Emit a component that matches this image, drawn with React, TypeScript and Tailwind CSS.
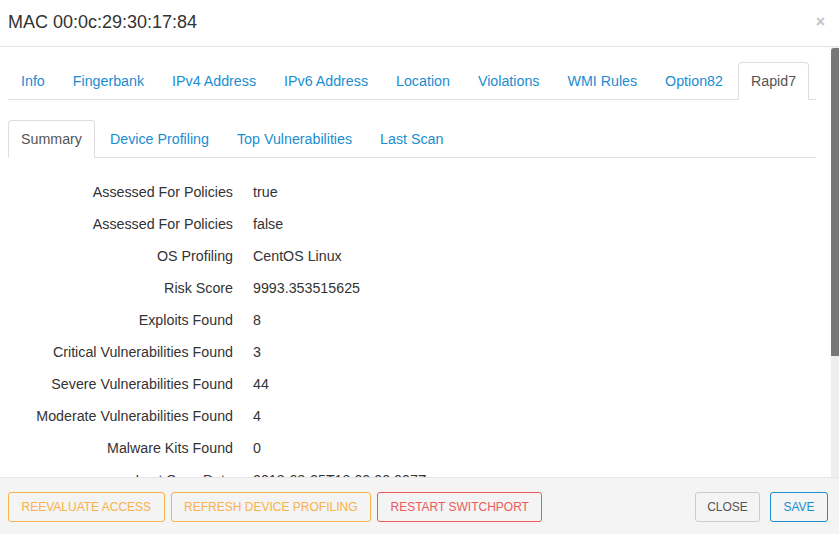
import React from 'react';

const MAIN_TABS = ['Info', 'Fingerbank', 'IPv4 Address', 'IPv6 Address', 'Location', 'Violations', 'WMI Rules', 'Option82', 'Rapid7'];
const SUB_TABS = ['Summary', 'Device Profiling', 'Top Vulnerabilities', 'Last Scan'];

const ROWS: [string, string][] = [
  ['Assessed For Policies', 'true'],
  ['Assessed For Policies', 'false'],
  ['OS Profiling', 'CentOS Linux'],
  ['Risk Score', '9993.353515625'],
  ['Exploits Found', '8'],
  ['Critical Vulnerabilities Found', '3'],
  ['Severe Vulnerabilities Found', '44'],
  ['Moderate Vulnerabilities Found', '4'],
  ['Malware Kits Found', '0'],
  ['Last Scan Date', '2018-08-25T18:00:00.007Z'],
  ['Last Scan Engine', 'Local scan engine'],
  ['Site', 'PacketFence'],
  ['Total Vulnerabilities Found', '51'],
  ['Last Updated', '2018-08-27T09:14:22.000Z'],
];

function Tabs({ items, active }: { items: string[]; active: string }) {
  return (
    <ul className="flex whitespace-nowrap border-b border-[#dddddd]">
      {items.map((t) => (
        <li key={t} className="mr-[2px] -mb-px shrink-0">
          {t === active ? (
            <span className="block rounded-t-[4px] border border-[#dddddd] border-b-white bg-white px-3 py-2 leading-5 text-[#555555]">
              {t}
            </span>
          ) : (
            <span className="block border border-transparent px-3 py-2 leading-5 text-[#1b8dd1]">{t}</span>
          )}
        </li>
      ))}
    </ul>
  );
}

// the page's scrollbar: headless hides the native one, so it is drawn
function ScrollBar() {
  return (
    <div className="w-[8px] shrink-0 bg-[#efefef] pt-px">
      <div className="h-[308px] rounded-tl-[3px] bg-[#777777]" />
    </div>
  );
}

export default function App() {
  return (
    <div className="flex h-[534px] w-[839px] flex-col overflow-hidden bg-white font-['Liberation_Sans',Arial,sans-serif] text-[14.25px] text-[#333333]">
      <div className="flex h-[47px] shrink-0 items-center justify-between border-b border-[#e5e5e5] pb-[3px] pl-2 pr-[14px]">
        <h4 className="text-[18px] leading-5 text-[#333333]">MAC 00:0c:29:30:17:84</h4>
        <button type="button" className="text-[16px] font-bold leading-none text-[#c4c4c4]">×</button>
      </div>

      <div className="flex min-h-0 flex-1">
        <div className="min-w-0 flex-1 overflow-hidden">
          <div className="pb-6 pl-2 pr-[15px] pt-[15px]">
            <Tabs items={MAIN_TABS} active="Rapid7" />
            <div className="mt-5">
              <Tabs items={SUB_TABS} active="Summary" />
            </div>
            <dl className="mt-[19px]">
              {ROWS.map(([k, v], i) => (
                <div key={i} className="grid h-8 grid-cols-[225px_1fr] items-center gap-5 whitespace-nowrap">
                  <dt className="text-right">{k}</dt>
                  <dd>{v}</dd>
                </div>
              ))}
            </dl>
          </div>
        </div>
        <ScrollBar />
      </div>

      <div className="flex h-[57px] shrink-0 items-center justify-between border-t border-[#e5e5e5] bg-[#f4f4f4] px-2 pt-[2px]">
        <div className="flex gap-[6px] whitespace-nowrap">
          <button type="button" className="h-[30px] rounded-[3px] border border-[#f7b24a] px-[12.5px] text-[12px] text-[#f7b24a]">REEVALUATE ACCESS</button>
          <button type="button" className="h-[30px] rounded-[3px] border border-[#f7b24a] px-[12.5px] text-[12px] text-[#f7b24a]">REFRESH DEVICE PROFILING</button>
          <button type="button" className="h-[30px] rounded-[3px] border border-[#ec5a5e] px-[12.5px] text-[12px] text-[#ec5a5e]">RESTART SWITCHPORT</button>
        </div>
        <div className="flex gap-[10px] pr-[3px]">
          <button type="button" className="h-[30px] rounded-[3px] border border-[#cccccc] px-[11px] text-[12px] text-[#555555]">CLOSE</button>
          <button type="button" className="h-[30px] rounded-[3px] border border-[#1b8dd1] px-[12.5px] text-[12px] text-[#1b8dd1]">SAVE</button>
        </div>
      </div>
    </div>
  );
}
